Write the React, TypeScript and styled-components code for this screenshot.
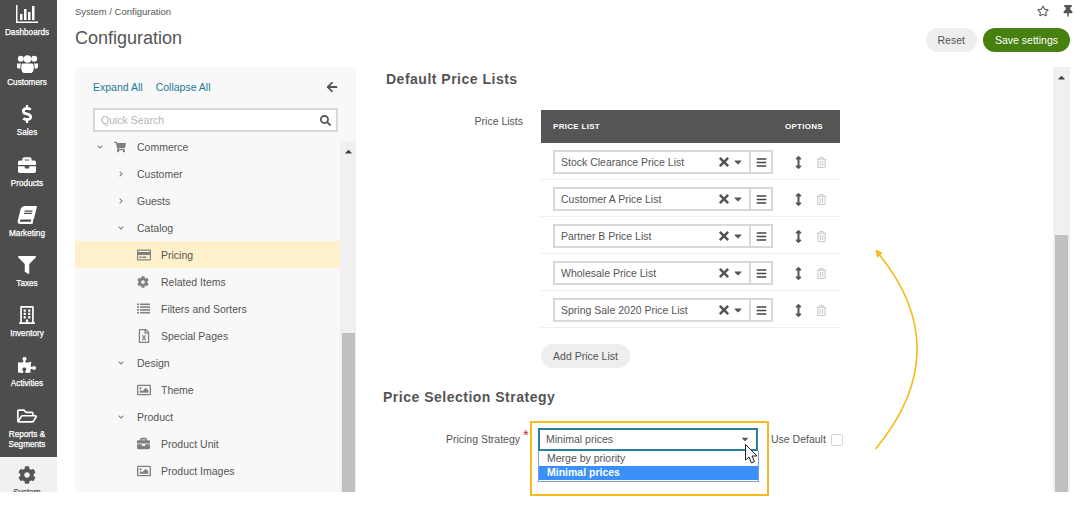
import React from "react";
import styled, { createGlobalStyle } from "styled-components";
import {
  FaDollarSign, FaBriefcase, FaBook, FaFilter, FaRegBuilding, FaPuzzlePiece, FaRegFolderOpen, FaCog,
  FaShoppingCart, FaRegCreditCard, FaRegFileExcel, FaRegImage, FaArrowLeft, FaSearch, FaTimes, FaCaretDown,
  FaBars, FaArrowsAltV, FaRegTrashAlt, FaRegStar, FaThumbtack, FaChevronDown, FaChevronRight, FaCaretUp,
} from "react-icons/fa";

const Global = createGlobalStyle`
  html, body { margin: 0; padding: 0; background: #fff; }
  body { font-family: "Liberation Sans", Arial, sans-serif; color: #555; }
  * { box-sizing: border-box; }
`;

const Page = styled.div`
  position: relative;
  width: 1075px;
  height: 523px;
  overflow: hidden;
`;
const Shell = styled.div`
  display: flex;
  width: 1075px;
  height: 492px;
  overflow: hidden;
`;
const Nav = styled.nav`
  width: 57px;
  flex: none;
  background: #4d4d4d;
  display: flex;
  flex-direction: column;
`;
const NavItem = styled.div<{ $h?: number; $active?: boolean }>`
  height: ${(p) => p.$h ?? 50.2}px;
  flex: none;
  display: flex;
  flex-direction: column;
  align-items: center;
  padding: ${(p) => (p.$active ? 9 : 5)}px 3px 0 0;
  background: ${(p) => (p.$active ? "#f1f1f1" : "transparent")};
  color: ${(p) => (p.$active ? "#555" : "#fff")};
`;
const NavIcon = styled.div<{ $size?: number }>`
  height: 18px;
  display: flex;
  align-items: center;
  justify-content: center;
  font-size: ${(p) => p.$size ?? 18}px;
`;
const NavLabel = styled.div<{ $tight?: boolean }>`
  margin-top: ${(p) => (p.$tight ? 4 : 5)}px;
  font-size: 8.2px;
  font-weight: 400;
  -webkit-text-stroke: 0.25px currentColor;
  line-height: 10px;
  text-align: center;
  white-space: pre-line;
`;
const SlantBook = styled(FaBook)`
  transform: skewX(-14deg);
`;
const Main = styled.div`
  flex: 1;
  min-width: 0;
  display: flex;
  flex-direction: column;
`;
const Header = styled.header`
  height: 67px;
  flex: none;
  display: flex;
  justify-content: space-between;
  padding: 0 5px 0 18px;
`;
const Crumbs = styled.div`
  margin-top: 6px;
  font-size: 9.5px;
  line-height: 12px;
  color: #555;
`;
const Title = styled.h1`
  margin: 8px 0 0;
  font-size: 18px;
  line-height: 24px;
  font-weight: 400;
  color: #555;
`;
const HeaderRight = styled.div`
  display: flex;
  flex-direction: column;
  align-items: flex-end;
`;
const TopIcons = styled.div`
  height: 28px;
  display: flex;
  align-items: flex-start;
  gap: 13px;
  padding-top: 5px;
  margin-right: -4px;
  font-size: 12px;
  color: #555;
`;
const Actions = styled.div`
  display: flex;
  gap: 6px;
`;
const Pill = styled.button<{ $primary?: boolean }>`
  height: 24px;
  border: 0;
  border-radius: 12px;
  padding: 0 12px;
  font: 400 10.5px "Liberation Sans", Arial, sans-serif;
  background: ${(p) => (p.$primary ? "#46800f" : "#eeeeee")};
  color: ${(p) => (p.$primary ? "#fff" : "#555")};
`;
const Body = styled.div`
  flex: 1;
  min-height: 0;
  display: flex;
  margin-left: 18px;
`;
const TreePanel = styled.aside`
  width: 281px;
  flex: none;
  background: #f8f8f8;
  border-radius: 3px 3px 0 0;
  display: flex;
  flex-direction: column;
`;
const TreeTop = styled.div`
  height: 66px;
  flex: none;
  padding: 13px 18px 0 18px;
`;
const LinkRow = styled.div`
  display: flex;
  align-items: center;
  height: 14px;
  font-size: 10.5px;
  gap: 13px;
  color: #1f7a9e;
`;
const Collapse = styled.span`
  margin-left: auto;
  font-size: 12px;
  line-height: 0;
  color: #555;
`;
const Search = styled.div`
  margin-top: 14px;
  height: 24px;
  width: 245px;
  border: 2px solid #d8d8d8;
  background: #fff;
  display: flex;
  align-items: center;
  justify-content: space-between;
  padding: 0 5px 0 6px;
  font-size: 10.5px;
  color: #b5b5b5;
  svg { color: #555; font-size: 11px; }
`;
const TreeScrollArea = styled.div`
  flex: 1;
  min-height: 0;
  display: flex;
  overflow: hidden;
`;
const TreeRows = styled.div`
  flex: 1;
  min-width: 0;
  display: flex;
  flex-direction: column;
`;
const TreeRow = styled.div<{ $depth: number; $active?: boolean }>`
  height: 27px;
  flex: none;
  display: flex;
  align-items: center;
  padding-left: ${(p) => p.$depth}px;
  font-size: 10.5px;
  color: #555;
  background: ${(p) => (p.$active ? "#fdf0cb" : "transparent")};
`;
const Caret = styled.span<{ $w: number }>`
  width: ${(p) => p.$w}px;
  flex: none;
  font-size: 6px;
  color: #777;
  display: inline-flex;
`;
const TreeIcon = styled.span<{ $w: number; $size: number }>`
  width: ${(p) => p.$w}px;
  flex: none;
  font-size: ${(p) => p.$size}px;
  color: #808080;
  display: inline-flex;
  align-items: center;
`;
const Track = styled.div<{ $w: number; $mt?: number; $mr?: number }>`
  width: ${(p) => p.$w}px;
  flex: none;
  margin-top: ${(p) => p.$mt ?? 0}px;
  margin-right: ${(p) => p.$mr ?? 0}px;
  background: #f0f0f0;
  display: flex;
  flex-direction: column;
  align-items: center;
`;
const TrackUp = styled.div`
  height: 20px;
  display: flex;
  align-items: center;
  font-size: 11px;
  color: #444;
  line-height: 0;
`;
const Thumb = styled.div<{ $top: number; $w: number }>`
  margin-top: ${(p) => p.$top}px;
  width: ${(p) => p.$w}px;
  flex: 1;
  background: #c0c0c0;
`;
const Content = styled.main`
  flex: 1;
  min-width: 0;
  padding: 3px 0 0 27px;
`;
const H2 = styled.h2<{ $indent?: number; $top?: number }>`
  margin: ${(p) => p.$top ?? 0}px 0 0 ${(p) => p.$indent ?? 0}px;
  font-size: 14px;
  line-height: 18px;
  font-weight: 700;
  letter-spacing: 0.5px;
  color: #555;
`;
const FieldRow = styled.div`
  display: flex;
  margin-top: 22px;
`;
const FieldLabel = styled.div<{ $w: number }>`
  width: ${(p) => p.$w}px;
  flex: none;
  text-align: right;
  font-size: 10.5px;
  line-height: 23px;
  color: #555;
`;
const Table = styled.div`
  width: 299px;
  margin-left: 18px;
`;
const TableHead = styled.div`
  height: 33px;
  background: #555;
  color: #fff;
  font-size: 8px;
  font-weight: 700;
  letter-spacing: 0.3px;
  display: flex;
  align-items: center;
  justify-content: space-between;
  padding: 0 17px 0 12px;
`;
const TableRow = styled.div`
  height: 37px;
  display: flex;
  align-items: flex-start;
  padding: 7px 0 0 12px;
  border-bottom: 1px solid #eeeeee;
`;
const SelectBox = styled.div`
  width: 220px;
  height: 24px;
  border: 2px solid #d8d8d8;
  display: flex;
  align-items: center;
  font-size: 10.5px;
  color: #555;
`;
const SelectText = styled.div`
  flex: 1;
  padding-left: 6px;
  white-space: nowrap;
`;
const ClearIcons = styled.div`
  display: flex;
  align-items: center;
  gap: 1px;
  padding-right: 5px;
  font-size: 12px;
  color: #555;
`;
const ClearX = styled(FaTimes)`
  font-size: 14px;
`;
const BarsBtn = styled.div`
  width: 22px;
  align-self: stretch;
  border-left: 2px solid #d8d8d8;
  display: flex;
  align-items: center;
  justify-content: center;
  font-size: 11px;
  color: #444;
`;
const RowTools = styled.div`
  display: flex;
  align-items: center;
  height: 24px;
  margin-left: 19px;
  gap: 11px;
  font-size: 13px;
  color: #555;
`;
const Trash = styled.span`
  color: #c8c8c8;
  font-size: 11px;
  display: inline-flex;
`;
const AddBtn = styled(Pill)`
  margin: 16px 0 0 158px;
  display: block;
  width: 89px;
  padding: 0;
`;
const StrategyRow = styled.div`
  display: flex;
  align-items: center;
  margin-top: 22px;
  height: 23px;
`;
const Star = styled.span`
  width: 18px;
  flex: none;
  padding-left: 3px;
  color: #b03a3a;
  font-size: 15px;
  line-height: 13px;
  align-self: flex-start;
`;
const DropWrap = styled.div`
  position: relative;
  width: 220px;
  flex: none;
`;
const Dropdown = styled.div`
  height: 23px;
  border: 2px solid #2a7f9e;
  display: flex;
  align-items: center;
  justify-content: space-between;
  padding: 0 6px 2px;
  font-size: 10.5px;
  color: #555;
  svg { font-size: 10px; }
`;
const Menu = styled.div`
  position: absolute;
  left: 0;
  top: 23px;
  width: 221px;
  height: 31px;
  background: #fff;
  border: 1px solid #7f9ddb;
  border-top: 0;
  font-size: 10.5px;
`;
const MenuItem = styled.div<{ $on?: boolean }>`
  height: 14px;
  line-height: 12px;
  padding-left: 8px;
  margin-top: ${(p) => (p.$on ? 0 : 1)}px;
  background: ${(p) => (p.$on ? "#3a8ffb" : "transparent")};
  color: ${(p) => (p.$on ? "#fff" : "#555")};
  font-weight: ${(p) => (p.$on ? 700 : 400)};
`;
const UseDefault = styled.label`
  margin-left: 13px;
  display: flex;
  align-items: center;
  gap: 5px;
  font-size: 10.5px;
  line-height: 12px;
  color: #555;
`;
const DefaultText = styled.span`
  padding-bottom: 2px;
`;
const Check = styled.span`
  width: 12px;
  height: 12px;
  border: 1.5px solid #d4d4d4;
  border-radius: 2px;
  background: #fff;
`;
const Highlight = styled.div`
  position: absolute;
  left: 530px;
  top: 421px;
  width: 239px;
  height: 75px;
  border: 2px solid #f5ba1e;
  pointer-events: none;
`;
const Overlay = styled.svg`
  position: absolute;
  left: 0;
  top: 0;
  pointer-events: none;
`;

const BarChart = () => (
  <svg width="22" height="18" viewBox="0 0 22 18" fill="#fff">
    <rect x="0" y="0" width="1.5" height="18" />
    <rect x="0" y="16.5" width="22" height="1.5" />
    <rect x="4" y="9" width="2.5" height="6" />
    <rect x="8" y="4" width="2.5" height="11" />
    <rect x="12" y="7" width="2.5" height="8" />
    <rect x="16" y="1" width="2.5" height="14" />
  </svg>
);

const Users = () => (
  <svg width="21" height="18" viewBox="0 0 21 18" fill="#fff">
    <circle cx="3.8" cy="3.8" r="3" />
    <circle cx="17.2" cy="3.8" r="3" />
    <circle cx="10.5" cy="4" r="3.8" />
    <path d="M0 8.5h4.2c-.6 1-.8 2-.8 3.5 0 .5 0 1 .2 1.4H1.4C.5 13.4 0 12.8 0 11.8z" />
    <path d="M21 8.5h-4.2c.6 1 .8 2 .8 3.5 0 .5 0 1-.2 1.4h2.2c.9 0 1.4-.6 1.4-1.6z" />
    <path d="M6 8.5h9c1.3 0 1.8 1.5 1.8 4 0 3-1.2 5.5-3 5.5H7.2c-1.8 0-3-2.5-3-5.5 0-2.5.5-4 1.8-4z" />
  </svg>
);

const ListIcon = () => (
  <svg width="13" height="11" viewBox="0 0 13 11" fill="#808080">
    <rect x="0" y="0.5" width="2" height="1.6" /><rect x="3" y="0.5" width="10" height="1.6" />
    <rect x="0" y="3.3" width="2" height="1.6" /><rect x="3" y="3.3" width="10" height="1.6" />
    <rect x="0" y="6.1" width="2" height="1.6" /><rect x="3" y="6.1" width="10" height="1.6" />
    <rect x="0" y="8.9" width="2" height="1.6" /><rect x="3" y="8.9" width="10" height="1.6" />
  </svg>
);

const navItems: [React.ReactNode, string, number?, number?][] = [
  [<BarChart />, "Dashboards"],
  [<Users />, "Customers"],
  [<FaDollarSign />, "Sales"],
  [<FaBriefcase />, "Products"],
  [<SlantBook />, "Marketing"],
  [<FaFilter />, "Taxes"],
  [<FaRegBuilding />, "Inventory"],
  [<FaPuzzlePiece />, "Activities"],
  [<FaRegFolderOpen />, "Reports &\nSegments", 55.4, 20],
];

type Row = { label: string; depth: number; caret?: "down" | "right"; icon?: React.ReactNode; size?: number; active?: boolean };
const rows: Row[] = [
  { label: "Commerce", depth: 22, caret: "down", icon: <FaShoppingCart />, size: 12 },
  { label: "Customer", depth: 43, caret: "right" },
  { label: "Guests", depth: 43, caret: "right" },
  { label: "Catalog", depth: 43, caret: "down" },
  { label: "Pricing", depth: 62, icon: <FaRegCreditCard />, size: 14, active: true },
  { label: "Related Items", depth: 62, icon: <FaCog />, size: 12 },
  { label: "Filters and Sorters", depth: 62, icon: <ListIcon />, size: 13 },
  { label: "Special Pages", depth: 62, icon: <FaRegFileExcel />, size: 14 },
  { label: "Design", depth: 43, caret: "down" },
  { label: "Theme", depth: 62, icon: <FaRegImage />, size: 14 },
  { label: "Product", depth: 43, caret: "down" },
  { label: "Product Unit", depth: 62, icon: <FaBriefcase />, size: 13 },
  { label: "Product Images", depth: 62, icon: <FaRegImage />, size: 14 },
];

const priceLists = [
  "Stock Clearance Price List",
  "Customer A Price List",
  "Partner B Price List",
  "Wholesale Price List",
  "Spring Sale 2020 Price List",
];

export default function App() {
  return (
    <Page>
      <Global />
      <Shell>
        <Nav>
          {navItems.map(([icon, label, h, size]) => (
            <NavItem key={label} $h={h}>
              <NavIcon $size={size}>{icon}</NavIcon>
              <NavLabel>{label}</NavLabel>
            </NavItem>
          ))}
          <NavItem $active $h={50}>
            <NavIcon><FaCog /></NavIcon>
            <NavLabel $tight>System</NavLabel>
          </NavItem>
        </Nav>
        <Main>
          <Header>
            <div>
              <Crumbs>System / Configuration</Crumbs>
              <Title>Configuration</Title>
            </div>
            <HeaderRight>
              <TopIcons>
                <FaRegStar />
                <FaThumbtack />
              </TopIcons>
              <Actions>
                <Pill>Reset</Pill>
                <Pill $primary>Save settings</Pill>
              </Actions>
            </HeaderRight>
          </Header>
          <Body>
            <TreePanel>
              <TreeTop>
                <LinkRow>
                  <span>Expand All</span>
                  <span>Collapse All</span>
                  <Collapse><FaArrowLeft /></Collapse>
                </LinkRow>
                <Search>
                  <span>Quick Search</span>
                  <FaSearch />
                </Search>
              </TreeTop>
              <TreeScrollArea>
                <TreeRows>
                  {rows.map((r) => (
                    <TreeRow key={r.label} $depth={r.depth} $active={r.active}>
                      {r.caret && (
                        <Caret $w={r.icon ? 17 : 19}>
                          {r.caret === "down" ? <FaChevronDown /> : <FaChevronRight />}
                        </Caret>
                      )}
                      {r.icon && <TreeIcon $w={r.caret ? 23 : 24} $size={r.size ?? 12}>{r.icon}</TreeIcon>}
                      {r.label}
                    </TreeRow>
                  ))}
                </TreeRows>
                <Track $w={16} $mt={8}>
                  <TrackUp><FaCaretUp /></TrackUp>
                  <Thumb $top={172} $w={13} />
                </Track>
              </TreeScrollArea>
            </TreePanel>
            <Content>
              <H2 $indent={3}>Default Price Lists</H2>
              <FieldRow>
                <FieldLabel $w={140}>Price Lists</FieldLabel>
                <Table>
                  <TableHead>
                    <span>PRICE LIST</span>
                    <span>OPTIONS</span>
                  </TableHead>
                  {priceLists.map((p) => (
                    <TableRow key={p}>
                      <SelectBox>
                        <SelectText>{p}</SelectText>
                        <ClearIcons>
                          <ClearX />
                          <FaCaretDown />
                        </ClearIcons>
                        <BarsBtn><FaBars /></BarsBtn>
                      </SelectBox>
                      <RowTools>
                        <FaArrowsAltV />
                        <Trash><FaRegTrashAlt /></Trash>
                      </RowTools>
                    </TableRow>
                  ))}
                </Table>
              </FieldRow>
              <AddBtn>Add Price List</AddBtn>
              <H2 $top={20}>Price Selection Strategy</H2>
              <StrategyRow>
                <FieldLabel $w={137}>Pricing Strategy</FieldLabel>
                <Star>*</Star>
                <DropWrap>
                  <Dropdown>
                    <span>Minimal prices</span>
                    <FaCaretDown />
                  </Dropdown>
                  <Menu>
                    <MenuItem>Merge by priority</MenuItem>
                    <MenuItem $on>Minimal prices</MenuItem>
                  </Menu>
                </DropWrap>
                <UseDefault>
                  <DefaultText>Use Default</DefaultText>
                  <Check />
                </UseDefault>
              </StrategyRow>
            </Content>
            <Track $w={17} $mr={5}>
              <TrackUp><FaCaretUp /></TrackUp>
              <Thumb $top={148} $w={13} />
            </Track>
          </Body>
        </Main>
      </Shell>
      <Highlight />
      <Overlay width="1075" height="523" viewBox="0 0 1075 523">
        <path d="M875.5 449 Q957.5 350 878 253" fill="none" stroke="#f5ba1e" strokeWidth="1.6" />
        <path d="M876 250 L882 253 L877.5 257 Z" fill="#f5ba1e" stroke="#f5ba1e" strokeWidth="1" />
        <path d="M745.5 444.5 L745.5 460 L749 457 L751.5 463 L754.5 461.5 L752 456 L757 456 Z" fill="#fff" stroke="#222" strokeWidth="1" />
      </Overlay>
    </Page>
  );
}
